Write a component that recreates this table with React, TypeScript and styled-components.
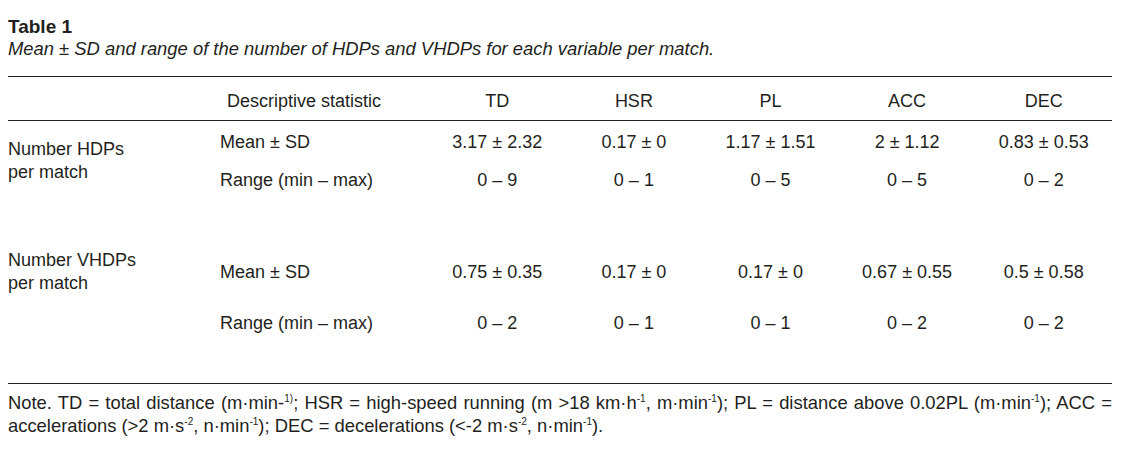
import styled, { createGlobalStyle } from 'styled-components';

const GlobalStyle = createGlobalStyle`
  html, body {
    margin: 0;
    padding: 0;
    background: #fff;
  }
  body {
    font-family: "Liberation Sans", Arial, Helvetica, sans-serif;
    color: #231f20;
    font-size: 18px;
  }
`;

const Page = styled.div`
  width: 1104px;
  margin-left: 8px;
  padding-top: 16px;
`;

const Title = styled.div`
  font-weight: bold;
  font-size: 19px;
  line-height: 22px;
`;

const Caption = styled.div`
  font-style: italic;
  font-size: 18.4px;
  line-height: 22px;
  margin-bottom: 16px;
`;

const Rule = styled.div`
  height: 1px;
  background: #231f20;
`;

const Grid = styled.div<{ $pad?: string; $gap?: number }>`
  display: grid;
  grid-template-columns: 212px 209px repeat(5, 1fr);
  row-gap: ${(p) => p.$gap ?? 0}px;
  padding: ${(p) => p.$pad ?? '0'};
  line-height: 22px;
`;

const Head = styled.div<{ $left?: boolean }>`
  text-align: ${(p) => (p.$left ? 'left' : 'center')};
  padding-left: ${(p) => (p.$left ? '7px' : '0')};
`;

const Label = styled.div<{ $span: number }>`
  grid-column: 1;
  grid-row: 1 / span ${(p) => p.$span};
  align-self: ${(p) => (p.$span > 1 ? 'center' : 'start')};
  line-height: 23px;
`;

const Stat = styled.div`
  grid-column: 2;
  align-self: center;
`;

const Value = styled.div`
  text-align: center;
  align-self: center;
`;

const Note = styled.div`
  padding-top: 7px;
  line-height: 23px;
  font-size: 18.4px;
`;

const NoteLine = styled.div<{ $justify?: boolean }>`
  white-space: nowrap;
  text-align: ${(p) => (p.$justify ? 'justify' : 'left')};
  text-align-last: ${(p) => (p.$justify ? 'justify' : 'left')};
`;

const Sup = styled.sup`
  font-size: 10px;
  line-height: 0;
  vertical-align: 7px;
`;

const columns = ['TD', 'HSR', 'PL', 'ACC', 'DEC'];

type Group = {
  label: string[];
  span: number;
  pad: string;
  gap: number;
  mean: string[];
  range: string[];
};

const groups: Group[] = [
  {
    label: ['Number HDPs', 'per match'],
    span: 2,
    pad: '10px 0 0',
    gap: 16,
    mean: ['3.17 ± 2.32', '0.17 ± 0', '1.17 ± 1.51', '2 ± 1.12', '0.83 ± 0.53'],
    range: ['0 – 9', '0 – 1', '0 – 5', '0 – 5', '0 – 2'],
  },
  {
    label: ['Number VHDPs', 'per match'],
    span: 1,
    pad: '58px 0 49px',
    gap: 17,
    mean: ['0.75 ± 0.35', '0.17 ± 0', '0.17 ± 0', '0.67 ± 0.55', '0.5 ± 0.58'],
    range: ['0 – 2', '0 – 1', '0 – 1', '0 – 2', '0 – 2'],
  },
];

export default function App() {
  return (
    <Page>
      <GlobalStyle />
      <Title>Table 1</Title>
      <Caption>Mean ± SD and range of the number of HDPs and VHDPs for each variable per match.</Caption>
      <Rule />
      <Grid $pad="13px 0 8px">
        <div />
        <Head $left>Descriptive statistic</Head>
        {columns.map((c) => (
          <Head key={c}>{c}</Head>
        ))}
      </Grid>
      <Rule />
      {groups.map((g) => (
        <Grid key={g.label[0]} $pad={g.pad} $gap={g.gap}>
          <Label $span={g.span}>
            {g.label[0]}
            <br />
            {g.label[1]}
          </Label>
          <Stat>Mean ± SD</Stat>
          {g.mean.map((v, i) => (
            <Value key={'m' + i}>{v}</Value>
          ))}
          <Stat>Range (min – max)</Stat>
          {g.range.map((v, i) => (
            <Value key={'r' + i}>{v}</Value>
          ))}
        </Grid>
      ))}
      <Rule />
      <Note>
        <NoteLine $justify>
          Note. TD = total distance (m·min-<Sup>1)</Sup>; HSR = high-speed running (m &gt;18 km·h<Sup>-1</Sup>, m·min<Sup>-1</Sup>); PL = distance above 0.02PL (m·min<Sup>-1</Sup>); ACC =
        </NoteLine>
        <NoteLine>
          accelerations (&gt;2 m·s<Sup>-2</Sup>, n·min<Sup>-1</Sup>); DEC = decelerations (&lt;-2 m·s<Sup>-2</Sup>, n·min<Sup>-1</Sup>).
        </NoteLine>
      </Note>
    </Page>
  );
}
